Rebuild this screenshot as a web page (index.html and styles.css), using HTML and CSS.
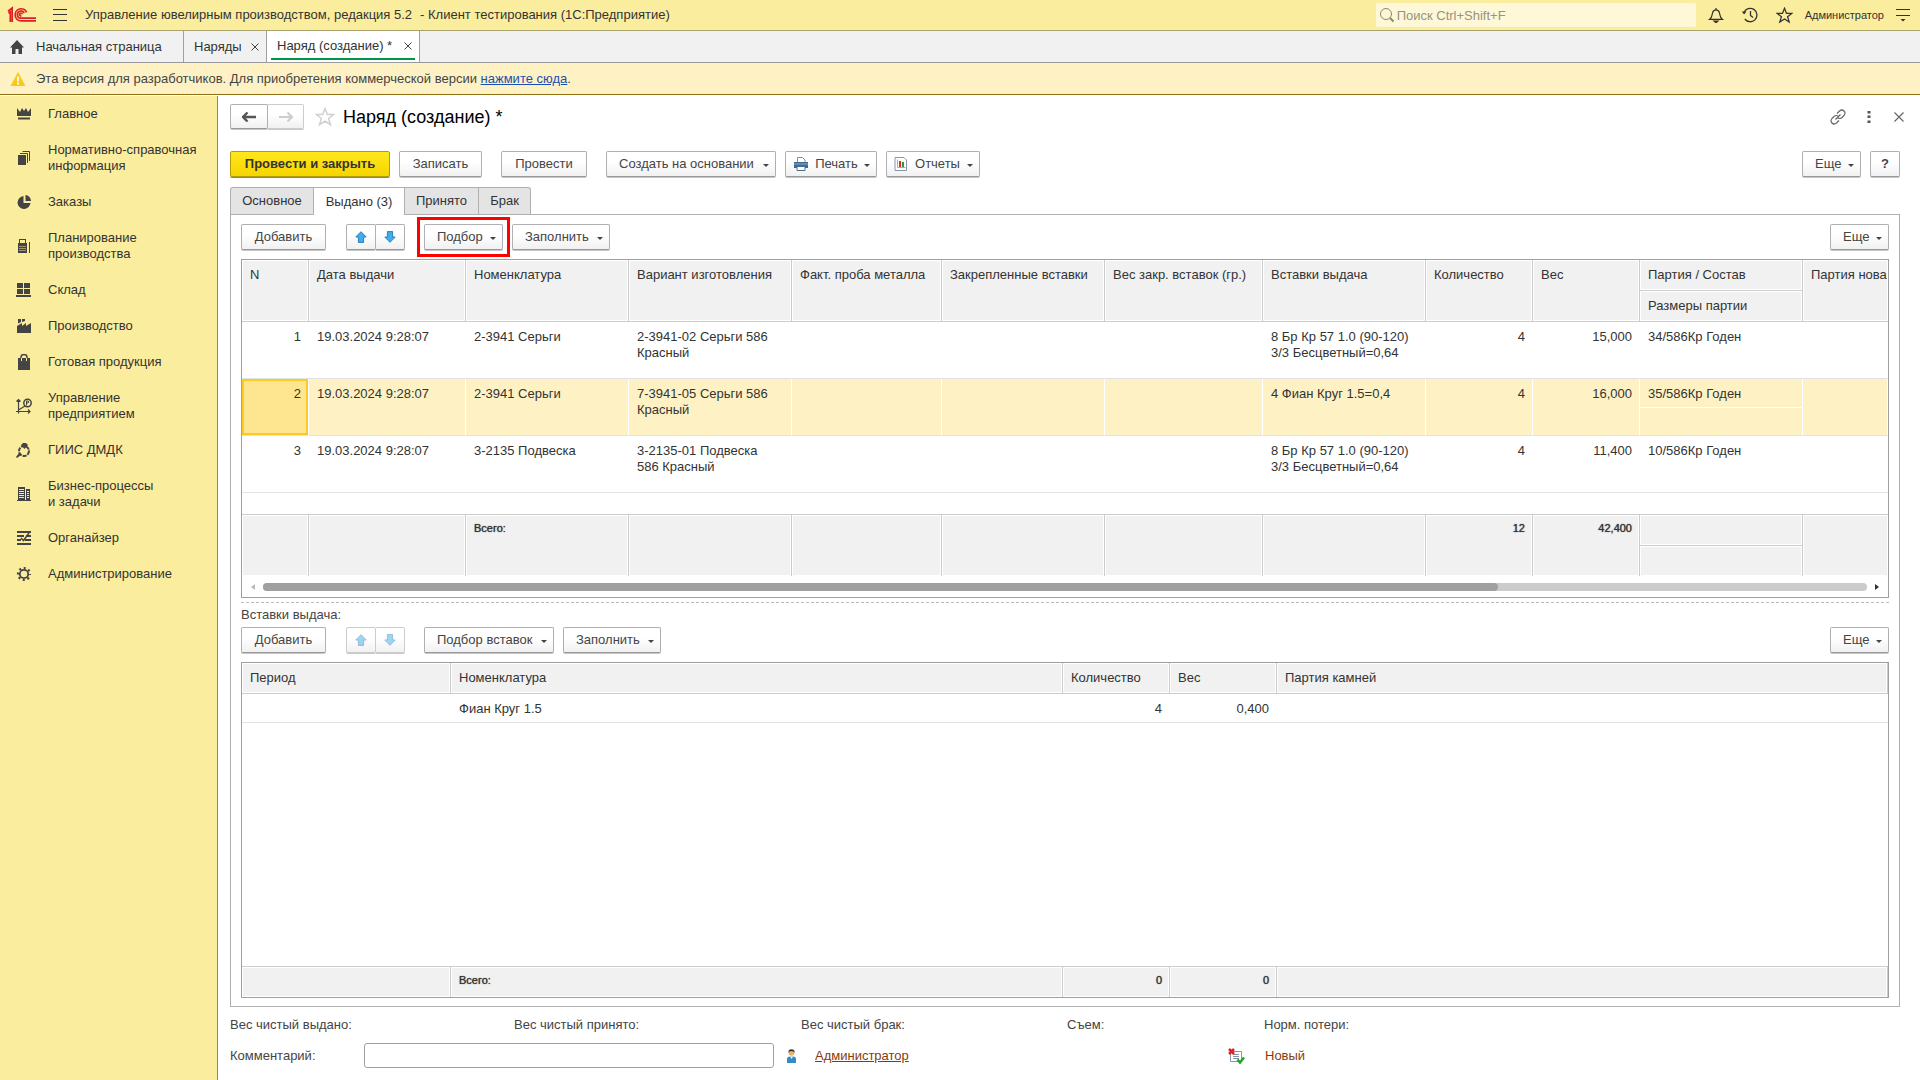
FILE: index.html
```html
<!DOCTYPE html>
<html lang="ru">
<head>
<meta charset="utf-8">
<title>Наряд (создание)</title>
<link rel="stylesheet" href="styles.css">
</head>
<body>
<svg class="sprite" aria-hidden="true">
  <symbol id="up" viewBox="0 0 12 12"><path d="M6 .7 11.2 6H8.6v5.4H3.4V6H.8z" fill="#41adea" stroke="#2a7fb8"/></symbol>
  <symbol id="down" viewBox="0 0 12 12"><path d="M6 11.3 11.2 6H8.6V.6H3.4V6H.8z" fill="#41adea" stroke="#2a7fb8"/></symbol>
  <symbol id="star" viewBox="0 0 16 16"><path d="M8 1.2 9.9 6h5l-4 3.2 1.5 5L8 11.3l-4.4 2.9 1.5-5L1.1 6h5z" fill="none" stroke="currentColor" stroke-width="1.2"/></symbol>
</svg>

<header class="topbar">
  <svg class="logo" width="30" height="18" viewBox="0 0 30 18" fill="none" stroke="#dc1f26" stroke-width="1.7"><path d="M1 5.2 5.2 2v14M1.5 7.3 3.3 6v10M19.6 6.3A6 6 0 1 0 14 14.800h15M17.200 7A3.600 3.600 0 1 0 14.200 12.200h14.800M15.200 8.200a1.300 1.300 0 1 0-.8 1.500"/></svg>
  <button class="plain" aria-label="Меню"><svg width="14" height="14" viewBox="0 0 14 14" stroke="#333" fill="none"><path d="M0 1.500h14M0 6.500h14M0 12.500h14"/></svg></button>
  <h1 class="app-name"><span>Управление ювелирным производством, редакция 5.2</span><span>- Клиент тестирования (1С:Предприятие)</span></h1>
  <label class="search"><svg width="16" height="16" viewBox="0 0 16 16" fill="none" stroke="#8c876b"><circle cx="7" cy="7" r="5.500"/><path d="m11 11 3.500 3.500" stroke-width="2"/></svg><input type="search" placeholder="Поиск Ctrl+Shift+F" aria-label="Поиск"></label>
  <div class="top-tools">
    <button class="plain" aria-label="Уведомления"><svg width="16" height="16" viewBox="0 0 16 16" fill="none" stroke="#333" stroke-width="1.200"><path d="M1.500 12.400C4 10.500 4 8.500 4.500 6 5 3.500 6.500 2.800 8 2.800S11 3.500 11.500 6c.5 2.500.5 4.500 3 6.400zM8 1v2"/><path d="M6 14h4l-2 1.800z" fill="#333"/></svg></button>
    <button class="plain" aria-label="История"><svg width="18" height="16" viewBox="0 0 18 16" fill="none" stroke="#333" stroke-width="1.300"><path d="M3 5.500A6.700 6.700 0 1 1 3.800 12M9.500 4v4.500l2.500 2"/><path d="M.8 4.500h4.700L3.100 7.500z" fill="#333" stroke="none"/></svg></button>
    <button class="plain" aria-label="Избранное"><svg width="17" height="17"><use href="#star"/></svg></button>
  </div>
  <a class="user" href="#">Администратор</a>
  <button class="plain" aria-label="Настройка"><svg width="14" height="14" viewBox="0 0 14 14" stroke="#333" fill="none"><path d="M0 1.500h14M0 7.500h14"/><path d="M4.500 11h5L7 13.500z" fill="#333" stroke="none"/></svg></button>
</header>

<nav class="windows">
  <a class="window home" href="#"><svg width="14" height="14" viewBox="0 0 14 14" fill="#444"><path d="M7 0 0 7.500h2V14h3.500V9h3v5H12V7.500h2z"/></svg>Начальная страница</a>
  <a class="window" href="#">Наряды <svg class="x" width="8" height="8" viewBox="0 0 8 8"><path d="m.5.5 7 7m0-7-7 7"/></svg></a>
  <a class="window current" href="#"><span>Наряд (создание) * <svg class="x" width="8" height="8" viewBox="0 0 8 8"><path d="m.5.5 7 7m0-7-7 7"/></svg></span></a>
</nav>

<p class="notice"><svg width="16" height="14" viewBox="0 0 16 14"><path d="M8 0 15.500 14H.5z" fill="#fbc71a"/><path d="M8 4.500v5M8 10.500v2" stroke="#fff" stroke-width="1.800"/></svg><span>Эта версия для разработчиков. Для приобретения коммерческой версии <a href="#">нажмите сюда</a>.</span></p>

<div class="workspace">
  <nav class="sections">
    <a href="#"><svg viewBox="0 0 16 16"><path d="M1 2l3 4 2-4 2 3 2-3 2 4 3-4v8H1zM2 11.500h12v2H2z"/></svg><span>Главное</span></a>
    <a href="#"><svg viewBox="0 0 16 16"><path d="M2 5h8v10H2z"/><path d="M4 3.500h7.500V13M6.500 1.500h7V11" fill="none" stroke="#444"/></svg><span>Нормативно-справочная<br>информация</span></a>
    <a href="#"><svg viewBox="0 0 16 16"><path d="M7.500 2a6.500 6.500 0 1 0 7 7h-7z"/><path d="M9.500 1a6 6 0 0 1 5.500 6H9.500z"/></svg><span>Заказы</span></a>
    <a href="#"><svg viewBox="0 0 16 16"><path d="M2 5h1V1h7v4h1v10H2zm2-3v3h5V2z" fill-rule="evenodd"/><path d="M13.500 4v11" stroke="#444"/><path d="M3.500 8.500h6.500M3.500 10.500h6.500M3.500 12.500h6.500" stroke="#fbed9e" stroke-dasharray="1 1"/></svg><span>Планирование<br>производства</span></a>
    <a href="#"><svg viewBox="0 0 16 16"><path d="M1 1h6v5H1zm7 0h6v5H8zM1 7h6v5H1zm7 0h6v5H8zM0 13h15v2H0z"/></svg><span>Склад</span></a>
    <a href="#"><svg viewBox="0 0 16 16"><path d="M1 15V8l5-3v3l4-3v3l5-3v10zM2 1h3v3L2 5.500zM6 1h3v2L6 4z"/></svg><span>Производство</span></a>
    <a href="#"><svg viewBox="0 0 16 16"><path d="M2 4h12v12H2z"/><path d="M5 7V3q0-2.500 3-2.500T11 3v4" fill="none" stroke="#444" stroke-width="1.500"/><path d="M5.500 7V4m5 3V4" stroke="#fbed9e"/></svg><span>Готовая продукция</span></a>
    <a href="#"><svg viewBox="0 0 16 16" fill="none" stroke="#444"><path d="M2.500 15.500v-14M.5 3.500l2-2 2 2M0 13.500h14M12 11.500l2 2-2 2M2.500 12 9 8" stroke-width="1.200"/><circle cx="11.500" cy="5" r="3.700" stroke-width="1.500"/><path d="M10.500 7.500V3h1.500q1.500 1 0 2h-2"/></svg><span>Управление<br>предприятием</span></a>
    <a href="#"><svg viewBox="0 0 16 16"><circle cx="8" cy="9" r="5" fill="none" stroke="#444" stroke-width="2" stroke-dasharray="4 1"/><path d="m5 3 2-2h3l2 2-3.500 4zM0 15l3-4 2 2-4 3z"/></svg><span>ГИИС ДМДК</span></a>
    <a href="#"><svg viewBox="0 0 16 16"><path d="M2 1h7v14H2zm8 2h4v12h-4zM1 14h14v1H1z"/><path d="M3 3.500h5m-5 2h5m-5 2h5m-5 2h5m-5 2h5m3-6h2m-2 2h2m-2 2h2m-2 2h2" stroke="#fbed9e"/></svg><span>Бизнес-процессы<br>и задачи</span></a>
    <a href="#"><svg viewBox="0 0 16 16" fill="none" stroke="#444" stroke-width="2"><path d="M1 2h14M1 6h7m2 0h5M1 10h4m4 0h6M1 14h14"/><path d="M13 3 7.500 10.500 5 8" stroke-width="1.500"/></svg><span>Органайзер</span></a>
    <a href="#"><svg viewBox="0 0 16 16" fill="none" stroke="#444"><circle cx="8" cy="8" r="4.200" stroke-width="1.800"/><circle cx="8" cy="8" r="6" stroke-width="2.200" stroke-dasharray="2 2.712" stroke-dashoffset="1"/></svg><span>Администрирование</span></a>
  </nav>

  <main class="form">
    <div class="form-head">
      <div class="pair">
        <button class="btn" aria-label="Назад"><svg width="14" height="10" viewBox="0 0 14 10"><path d="M5.500.5 1 5l4.500 4.500M1 5h13" fill="none" stroke="#555" stroke-width="2.400"/></svg></button>
        <button class="btn faded" aria-label="Вперед"><svg width="14" height="10" viewBox="0 0 14 10"><path d="M8.500.5 13 5 8.500 9.500M13 5H0" fill="none" stroke="#ccc" stroke-width="2"/></svg></button>
      </div>
      <button class="plain favorite" aria-label="В избранное"><svg width="20" height="20"><use href="#star"/></svg></button>
      <h2>Наряд (создание) *</h2>
      <div class="head-tools">
        <button class="plain" aria-label="Ссылка"><svg width="16" height="16" viewBox="0 0 16 16" fill="none" stroke="#666" stroke-width="1.200"><path d="M7 4.500 9.500 2Q12 0 14 2t0 4.500L11.500 9Q9.500 10 8 9M9 11.500 6.500 14Q4 16 2 14T2 9.500L4.500 7Q6.500 6 8 7M5.500 10.500l5-5"/></svg></button>
        <button class="plain" aria-label="Действия"><svg width="16" height="12" viewBox="0 0 16 12" fill="#555"><path d="M6.500 0h3v2.500h-3zm0 4.500h3V7h-3zm0 5h3V12h-3z"/></svg></button>
        <button class="plain" aria-label="Закрыть"><svg width="10" height="10" viewBox="0 0 10 10"><path d="m.5.5 9 9m0-9-9 9" stroke="#666" stroke-width="1.200"/></svg></button>
      </div>
    </div>

    <div class="bar commands">
      <button class="btn main-action">Провести и закрыть</button>
      <button class="btn w-write">Записать</button>
      <button class="btn w-post spaced">Провести</button>
      <button class="btn menu w-create spaced">Создать на основании</button>
      <button class="btn menu w-print"><svg width="16" height="14" viewBox="0 0 16 14"><path d="M4.500 6V.5h5L12 3v3" fill="#fff" stroke="#7d8fa3"/><path d="M1 5h14v6H1z" fill="#3c6a94"/><path d="M1 7h14" stroke="#8cb0d0"/><path d="M4 9.500h8v4H4z" fill="#fff" stroke="#4b6f92"/></svg>Печать</button>
      <button class="btn menu w-reports"><svg width="14" height="14" viewBox="0 0 14 14"><path d="M1 .5h9L12.500 3v10.500H1z" fill="#fff" stroke="#8796a8"/><path d="M3.500 2.500v8h8" fill="none" stroke="#aab"/><path d="M5 4h2v6H5z" fill="#e22"/><path d="M8 5h2v5H8z" fill="#2a9a2a"/></svg>Отчеты</button>
      <button class="btn menu more">Еще</button>
      <button class="btn help">?</button>
    </div>

    <div class="tabs" role="tablist">
      <button role="tab" class="t1">Основное</button>
      <button role="tab" class="t2" aria-selected="true">Выдано (3)</button>
      <button role="tab" class="t3">Принято</button>
      <button role="tab" class="t4">Брак</button>
    </div>

    <section class="panel">
      <div class="bar">
        <button class="btn w-add">Добавить</button>
        <div class="pair arrows"><button class="btn" aria-label="Вверх"><svg width="12" height="12"><use href="#up"/></svg></button><button class="btn" aria-label="Вниз"><svg width="12" height="12"><use href="#down"/></svg></button></div>
        <div class="marked"><button class="btn menu w-pick">Подбор</button></div>
        <button class="btn menu w-fill">Заполнить</button>
        <button class="btn menu more">Еще</button>
      </div>

      <div class="grid-box">
        <table class="grid issued">
          <colgroup><col class="c67"><col class="c157"><col class="c163"><col class="c163"><col class="c150"><col class="c163"><col class="c158"><col class="c163"><col class="c107"><col class="c107"><col class="c163"><col></colgroup>
          <thead>
            <tr><th rowspan="2">N</th><th rowspan="2">Дата выдачи</th><th rowspan="2">Номенклатура</th><th rowspan="2">Вариант изготовления</th><th rowspan="2">Факт. проба металла</th><th rowspan="2">Закрепленные вставки</th><th rowspan="2">Вес закр. вставок (гр.)</th><th rowspan="2">Вставки выдача</th><th rowspan="2">Количество</th><th rowspan="2">Вес</th><th>Партия / Состав</th><th rowspan="2">Партия нова</th></tr>
            <tr><th>Размеры партии</th></tr>
          </thead>
          <tbody>
            <tr><td class="num">1</td><td>19.03.2024 9:28:07</td><td>2-3941 Серьги</td><td>2-3941-02 Серьги 586<br>Красный</td><td></td><td></td><td></td><td>8 Бр Кр 57 1.0 (90-120)<br>3/3 Бесцветный=0,64</td><td class="num">4</td><td class="num">15,000</td><td>34/586Кр Годен</td><td></td></tr>
            <tr class="selected"><td class="num focused">2</td><td>19.03.2024 9:28:07</td><td>2-3941 Серьги</td><td>7-3941-05 Серьги 586<br>Красный</td><td></td><td></td><td></td><td>4 Фиан Круг 1.5=0,4</td><td class="num">4</td><td class="num">16,000</td><td class="split"><div>35/586Кр Годен</div></td><td></td></tr>
            <tr><td class="num">3</td><td>19.03.2024 9:28:07</td><td>3-2135 Подвеска</td><td>3-2135-01 Подвеска<br>586 Красный</td><td></td><td></td><td></td><td>8 Бр Кр 57 1.0 (90-120)<br>3/3 Бесцветный=0,64</td><td class="num">4</td><td class="num">11,400</td><td>10/586Кр Годен</td><td></td></tr>
            <tr class="blank"><td colspan="12"></td></tr>
          </tbody>
          <tfoot>
            <tr><td rowspan="2"></td><td rowspan="2"></td><td rowspan="2">Всего:</td><td rowspan="2"></td><td rowspan="2"></td><td rowspan="2"></td><td rowspan="2"></td><td rowspan="2"></td><td rowspan="2" class="num">12</td><td rowspan="2" class="num">42,400</td><td class="upper"></td><td rowspan="2"></td></tr>
            <tr><td></td></tr>
          </tfoot>
        </table>
        <div class="scroller">
          <svg width="5" height="8" viewBox="0 0 5 8"><path d="M5 1v6L1 4z" fill="#bbb"/></svg>
          <div class="track"><div class="thumb"></div></div>
          <svg width="5" height="8" viewBox="0 0 5 8"><path d="M0 1v6l4-3z" fill="#333"/></svg>
        </div>
      </div>

      <div class="splitter"></div>
      <p class="caption">Вставки выдача:</p>

      <div class="bar">
        <button class="btn w-add">Добавить</button>
        <div class="pair arrows faded"><button class="btn" aria-label="Вверх" disabled><svg width="12" height="12"><use href="#up"/></svg></button><button class="btn" aria-label="Вниз" disabled><svg width="12" height="12"><use href="#down"/></svg></button></div>
        <button class="btn menu w-inserts">Подбор вставок</button>
        <button class="btn menu w-fill">Заполнить</button>
        <button class="btn menu more">Еще</button>
      </div>

      <div class="grid-box stretch">
        <table class="grid inserts">
          <colgroup><col class="c209"><col class="c612"><col class="c107"><col class="c107"><col></colgroup>
          <thead><tr><th>Период</th><th>Номенклатура</th><th>Количество</th><th>Вес</th><th>Партия камней</th></tr></thead>
          <tbody>
            <tr><td></td><td>Фиан Круг 1.5</td><td class="num">4</td><td class="num">0,400</td><td></td></tr>
            <tr class="blank"><td colspan="5"></td></tr>
          </tbody>
          <tfoot><tr><td></td><td>Всего:</td><td class="num">0</td><td class="num">0</td><td></td></tr></tfoot>
        </table>
      </div>
    </section>

    <div class="sums"><span>Вес чистый выдано:</span><span>Вес чистый принято:</span><span>Вес чистый брак:</span><span>Съем:</span><span>Норм. потери:</span></div>
    <div class="foot">
      <label for="comment">Комментарий:</label>
      <input id="comment" type="text">
      <svg class="person" width="12" height="14" viewBox="0 0 12 14"><path d="M1 14V10q0-2.500 3-2.500h3q3 0 3 2.500v4z" fill="#2f8dc8"/><path d="M4 7.500h3L5.500 10z" fill="#fff"/><circle cx="5.500" cy="4" r="2.800" fill="#f0b060"/><path d="M2.500 4Q2 .3 5.500.3T8.500 4Q8 2 5.500 2T2.500 4z" fill="#333"/></svg>
      <a href="#">Администратор</a>
      <svg width="17" height="16" viewBox="0 0 17 16"><path d="M2.500 3.500h11v10h-11z" fill="#fff" stroke="#8796a8"/><path d="M5 6.500h6m-6 2h6m-6 2h6" stroke="#8796a8"/><path d="m1 1 5 5m0-5L1 6" stroke="#d22" stroke-width="2.500"/><path d="m9.500 11.500 2.500 3 4-5" fill="none" stroke="#1fa52a" stroke-width="2.500"/></svg>
      <span class="state">Новый</span>
    </div>
  </main>
</div>
</body>
</html>
```
FILE: styles.css
```css
* { box-sizing: border-box; }
body {
  margin: 0;
  min-height: 100vh;
  display: flex;
  flex-direction: column;
  font: 13px/16px "Liberation Sans", Arial, sans-serif;
  color: #333;
  background: #fff;
}
h1, h2, p { margin: 0; font: inherit; }
button, input { font: inherit; color: inherit; }
svg { display: block; flex: none; }
.sprite { width: 0; height: 0; position: absolute; }
.plain { display: flex; align-items: center; justify-content: center; padding: 0; border: 0; background: none; }

/* Application bar */
.topbar { display: flex; align-items: center; height: 31px; padding: 0 10px 0 7px; background: #fbed9e; border-bottom: 1px solid #a8a36c; }
.logo { margin-right: 16px; }
.app-name { display: flex; gap: 8px; margin-left: 18px; white-space: nowrap; }
.search { display: flex; align-items: center; width: 320px; height: 24px; margin-left: auto; padding-left: 3px; background: #fef8d8; border-radius: 2px; }
.search input { flex: 1; min-width: 0; height: 24px; padding: 0 2px; border: 0; outline: 0; background: none; }
.search input::placeholder { color: #97937e; opacity: 1; }
.top-tools { display: flex; gap: 17px; margin-left: 12px; }
.user { margin: 0 12px; color: #333; font-size: 11px; text-decoration: none; }

/* Open windows */
.windows { display: flex; height: 32px; background: #f1f1f1; border-bottom: 1px solid #999; }
.window { display: flex; align-items: center; justify-content: space-between; width: 83px; padding: 0 7px 0 10px; border-right: 1px solid #a0a0a0; color: #333; text-decoration: none; white-space: nowrap; }
.window.home { justify-content: flex-start; gap: 12px; width: 184px; }
.window.current { width: 153px; padding: 0 4px; background: #fff; }
.window.current span { flex: 1; display: flex; align-items: center; justify-content: space-between; height: 29px; margin-bottom: 2px; padding: 3px 3px 0 6px; border-bottom: 2px solid #009646; }
.x { stroke: #444; fill: none; }

.notice { display: flex; align-items: center; gap: 10px; height: 32px; padding-left: 10px; background: #fef2c5; border-bottom: 1px solid #8f7015; color: #444; }
.notice a { color: #1a50b0; }

/* Sections */
.workspace { flex: 1; display: flex; padding-top: 1px; }
.sections { width: 218px; flex: none; background: #fbed9e; border-right: 1px solid #8f8a5c; }
.sections a { display: flex; align-items: center; gap: 16px; padding: 10px 0 10px 16px; color: #333; text-decoration: none; }
.sections svg { width: 16px; height: 16px; }
.sections svg:not([fill]) { fill: #444; }

/* Form */
.form { flex: 1; min-width: 0; display: flex; flex-direction: column; padding: 8px 20px 12px 12px; color: #444; }
.form-head { display: flex; align-items: center; height: 25px; }
.form-head h2 { margin-left: 8px; font-size: 18px; line-height: 24px; color: #000; }
.favorite { margin-left: 11px; color: #d0d0d0; }
.head-tools { display: flex; align-items: center; gap: 15px; margin: 0 -4px 0 auto; }
.head-tools button:last-child { margin-left: 2px; }

.btn {
  display: flex; align-items: center; justify-content: center;
  height: 26px; padding: 0; white-space: nowrap; color: #444;
  border: 1px solid #b0b0b0; border-bottom-color: #989898; border-radius: 2px;
  background: linear-gradient(#fff 40%, #f1f1f1);
  box-shadow: 0 1px 0 #c8c8c8;
}
.pair { display: flex; }
.pair .btn { width: 38px; height: 25px; }
.pair .btn + .btn { width: 36px; border-left: 0; border-radius: 0 2px 2px 0; }
.pair.arrows .btn { width: 30px; height: 26px; }
.pair.arrows .btn + .btn { width: 29px; }
.btn.faded, .faded .btn { border-color: #ccc; }
.arrows.faded svg { opacity: .5; }

.bar { display: flex; gap: 9px; }
.commands { margin-top: 22px; }
.spaced { margin-left: 10px; }
.main-action { width: 160px; font-weight: bold; color: #333; background: linear-gradient(#ffe81c, #f6d500); border-color: #b39c0c; box-shadow: 0 1px 0 #a08a08; }
.w-write { width: 83px; }
.w-post { width: 86px; }
.w-create { width: 170px; }
.w-print { width: 92px; }
.w-reports { width: 94px; }
.w-add { width: 85px; }
.w-pick { width: 79px; }
.w-fill { width: 98px; }
.w-inserts { width: 130px; }
.help { width: 30px; font-weight: bold; }
.btn.menu { justify-content: space-between; padding: 0 6px 0 12px; }
.btn.menu.w-print, .btn.menu.w-reports { padding-left: 7px; }
.btn.menu::after { content: ""; margin-top: 3px; border: 3px solid transparent; border-top-color: #444; border-bottom: 0; }
.more { width: 59px; margin-left: auto; }
.bar .arrows { margin: 0 10px 0 11px; }
.marked { outline: 3px solid #f00; outline-offset: 4px; }

.tabs { display: flex; margin-top: 10px; }
.tabs button { height: 27px; padding: 0; border: solid #b0b0b0; border-width: 1px 1px 0 0; background: #e4e4e4; color: #333; }
.tabs button:first-child { border-left-width: 1px; border-top-left-radius: 3px; }
.tabs button:last-child { border-top-right-radius: 3px; }
.tabs [aria-selected] { height: 28px; margin-bottom: -1px; background: #fff; z-index: 1; }
.t1 { width: 84px; }
.t2 { width: 91px; }
.t3 { width: 74px; }
.t4 { width: 52px; }

.panel { flex: 1; display: flex; flex-direction: column; padding: 9px 10px 8px; border: 1px solid #b0b0b0; }

/* Tables */
.grid-box { margin-top: 9px; border: 1px solid #a0a0a0; overflow: hidden; }
.grid-box.stretch { flex: 1; display: flex; min-height: 120px; }
.grid { width: 100%; table-layout: fixed; border-collapse: separate; border-spacing: 0; color: #333; }
.grid th, .grid td { padding: 7px 6px 0 8px; text-align: left; vertical-align: top; font-weight: normal; white-space: nowrap; }
.grid th { height: 31px; background: #f1f1f1; border-right: 1px solid #ccc; border-bottom: 1px solid #ccc; box-shadow: inset 0 0 0 1px #fff; }
.grid th:last-child { padding-right: 0; }
.grid tbody td { border-bottom: 1px solid #e2e2e2; }
.grid .num { text-align: right; padding-right: 8px; }
.issued tbody td { height: 57px; }
.issued tr:first-child th:last-child, .issued tfoot tr:first-child td:last-child { border-right: 0; }
.grid .blank td { height: 21px; padding: 0; border: 0; }
.grid tfoot td { height: 30px; padding-top: 5px; font-size: 11px; background: #f1f1f1; border-right: 1px solid #ccc; box-shadow: inset 0 0 0 1px #fff; text-shadow: 0 0 1px #333; }
.grid tfoot tr:first-child td { border-top: 1px solid #ccc; }
.grid tfoot .num { padding-right: 7px; }
.issued tfoot .upper { height: 32px; border-bottom: 1px solid #ccc; }
.grid .selected td { background: #fef2c5; border-right: 1px solid #fff; }
.grid .selected .num { padding-right: 7px; }
.grid .selected .focused { background: #fee590; box-shadow: inset 0 0 0 2px #fdca22; }
.grid .selected .split { padding: 0; }
.split div { height: 29px; padding: 7px 8px 0; border-bottom: 1px solid #fff; }
.inserts tbody td { height: 29px; }
.inserts tfoot td { height: 31px; }
.stretch .blank td { height: auto; }
.c67 { width: 67px; } .c107 { width: 107px; } .c150 { width: 150px; } .c157 { width: 157px; }
.c158 { width: 158px; } .c163 { width: 163px; } .c209 { width: 209px; } .c612 { width: 612px; }

.scroller { display: flex; align-items: center; gap: 8px; height: 21px; padding: 0 8px; }
.track { flex: 1; height: 8px; border-radius: 4px; background: #ccc; }
.thumb { width: 77%; height: 8px; border-radius: 4px; background: #a0a0a0; }
.splitter { margin-top: 4px; border-top: 1px dashed #bbb; }
.caption { margin: 4px 0; }

/* Form footer */
.sums { display: grid; grid-template-columns: 284px 287px 266px 197px auto; margin-top: 10px; }
.foot { display: grid; grid-template-columns: 134px 410px 41px 413px 37px auto; align-items: center; margin-top: 10px; }
.foot input { height: 25px; border: 1px solid #a0a0a0; border-radius: 3px; padding: 0 6px; }
.foot a, .state { color: #8a3a0a; }
.person { margin-left: 12px; }
```
